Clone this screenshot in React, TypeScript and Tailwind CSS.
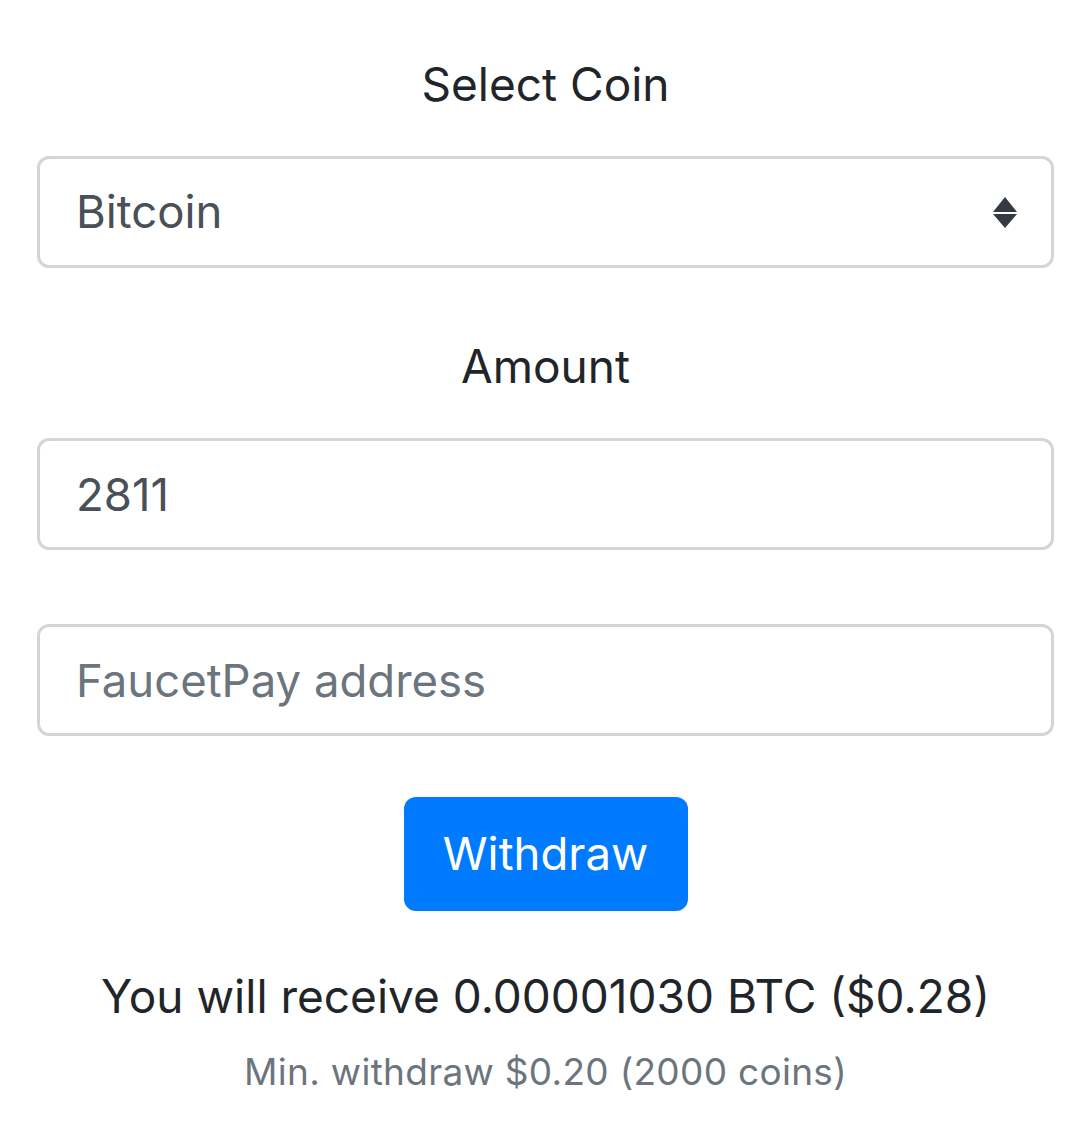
import { useState } from 'react'

const field =
  'h-[112px] w-full rounded-[12px] border-[3px] border-[#d3d6d9] bg-white px-[36px] text-[45.5px] text-[#495057] outline-none'

function SortArrows() {
  return (
    <svg width="26" height="31" viewBox="0 0 26 31" aria-hidden="true">
      <path d="M13 0 L25 15 L1 15 Z" fill="#343a40" />
      <path d="M1 17 L25 17 L13 31 Z" fill="#343a40" />
    </svg>
  )
}

export default function App() {
  const [amount, setAmount] = useState('2811')
  const [address, setAddress] = useState('')

  return (
    <div
      className="flex min-h-[1141px] w-full flex-col items-center bg-white px-[37px] text-[#212529]"
      style={{ fontFamily: 'Inter, "Noto Sans", sans-serif' }}
    >
      <label className="pt-[48px] text-[46px] leading-[72px]">Select Coin</label>

      <div className={`${field} mt-[36px] flex items-center justify-between pr-[33px]`}>
        <span>Bitcoin</span>
        <SortArrows />
      </div>

      <label className="mt-[62px] text-[46px] leading-[72px]">Amount</label>

      <input
        className={`${field} mt-[36px]`}
        value={amount}
        onChange={(e) => setAmount(e.target.value)}
      />

      <input
        className={`${field} mt-[74px] placeholder:text-[#6c757d]`}
        placeholder="FaucetPay address"
        value={address}
        onChange={(e) => setAddress(e.target.value)}
      />

      <button
        type="button"
        className="mt-[61px] h-[114px] w-[284px] rounded-[12px] bg-[#007bff] text-[45.5px] text-white"
      >
        Withdraw
      </button>

      <p className="mt-[49px] text-[46px] leading-[72px]">You will receive 0.00001030 BTC ($0.28)</p>
      <p className="mt-[11px] text-[37px] leading-[57px] tracking-[0.3px] text-[#6c757d]">
        Min. withdraw $0.20 (2000 coins)
      </p>
    </div>
  )
}
